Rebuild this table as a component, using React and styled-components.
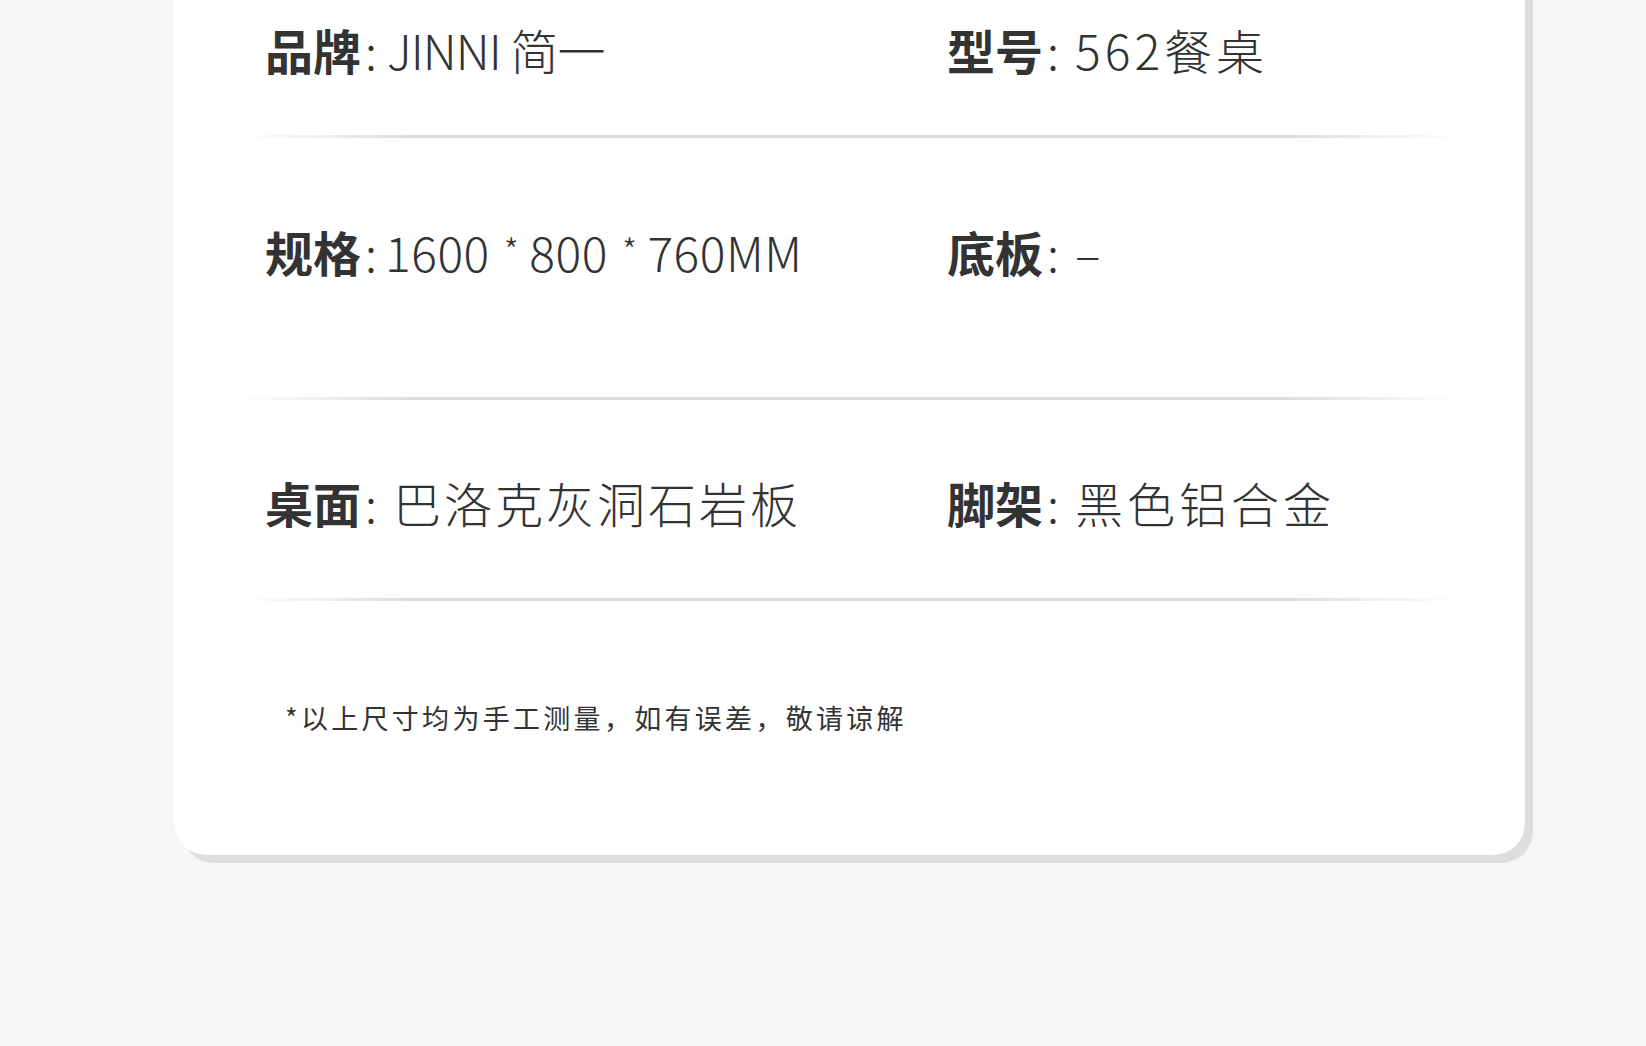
import React from 'react';
import styled, { createGlobalStyle } from 'styled-components';

const GlobalStyle = createGlobalStyle`
  html, body {
    margin: 0;
    padding: 0;
    background: #f6f6f6;
    font-family: "Noto Sans CJK SC", "Noto Sans", sans-serif;
  }
`;

const Page = styled.div`
  width: 100%;
  min-height: 1046px;
  background: #f6f6f6;
  padding-left: 174px;
  box-sizing: border-box;
  overflow: hidden;
`;

const Card = styled.section`
  width: 1351px;
  margin-top: -40px;
  padding: 40px 0 117px;
  background: #ffffff;
  border-radius: 32px;
  box-shadow: 8px 8px 0 #dedede;
  box-sizing: border-box;
`;

const Row = styled.div`
  display: grid;
  grid-template-columns: 682px 1fr;
  padding: ${p => p.$top}px 0 ${p => p.$bottom}px 91px;
  color: #333333;
`;

const Spec = styled.div`
  display: flex;
  align-items: baseline;
  height: 60px;
  line-height: 60px;
  font-size: 48px;
  white-space: nowrap;
`;

const Label = styled.span`
  font-weight: 700;
`;

const Colon = styled.span`
  font-weight: 300;
  margin: 0 ${p => p.$gap}px 0 4px;
`;

const Value = styled.span`
  font-weight: 300;
  letter-spacing: ${p => p.$spacing ?? 3}px;
`;

const Star = styled.span`
  font-size: 34px;
  position: relative;
  top: -8px;
  margin: 0 10px 0 14px;
`;

const Divider = styled.div`
  height: 3px;
  margin: 0 66px;
  background: linear-gradient(
    90deg,
    rgba(221, 221, 221, 0) 0%,
    #dddddd 14%,
    #dddddd 86%,
    rgba(221, 221, 221, 0) 100%
  );
`;

const Note = styled.p`
  margin: 97px 0 0 111px;
  line-height: 40px;
  font-size: 27px;
  font-weight: 400;
  letter-spacing: 3.3px;
  color: #333333;
`;

const SpecItem = ({ label, gap = 16, spacing, children }) => (
  <Spec>
    <Label>{label}</Label>
    <Colon $gap={gap}>:</Colon>
    <Value $spacing={spacing}>{children}</Value>
  </Spec>
);

export default function App() {
  return (
    <Page>
      <GlobalStyle />
      <Card>
        <Row $top={19} $bottom={56}>
          <SpecItem label="品牌" gap={10} spacing={-1}>JINNI 简一</SpecItem>
          <SpecItem label="型号" gap={16} spacing={4}>562餐桌</SpecItem>
        </Row>
        <Divider />
        <Row $top={83} $bottom={116}>
          <SpecItem label="规格" gap={8} spacing={0.5}>
            1600<Star>*</Star>800<Star>*</Star>760MM
          </SpecItem>
          <SpecItem label="底板" gap={16}>–</SpecItem>
        </Row>
        <Divider />
        <Row $top={72} $bottom={66}>
          <SpecItem label="桌面" gap={16}>巴洛克灰洞石岩板</SpecItem>
          <SpecItem label="脚架" gap={16} spacing={4}>黑色铝合金</SpecItem>
        </Row>
        <Divider />
        <Note>*以上尺寸均为手工测量，如有误差，敬请谅解</Note>
      </Card>
    </Page>
  );
}
